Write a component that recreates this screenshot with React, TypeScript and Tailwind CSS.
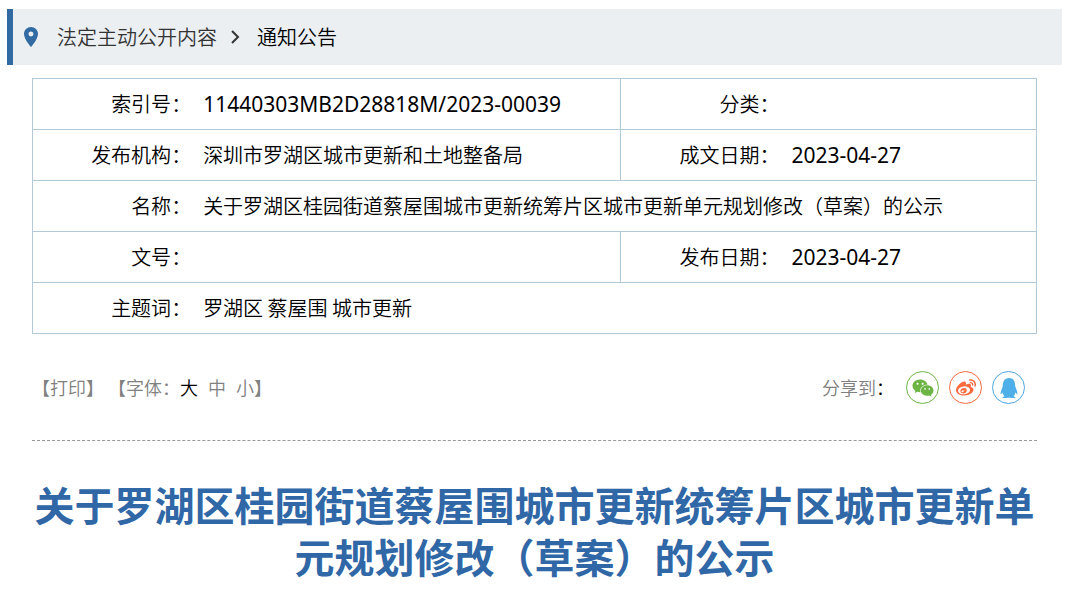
import clsx from "clsx";
import type { ReactNode } from "react";
import { AiFillWechat } from "react-icons/ai";
import { FaQq, FaWeibo } from "react-icons/fa";
import { MdLocationOn } from "react-icons/md";

const title =
  "关于罗湖区桂园街道蔡屋围城市更新统筹片区城市更新单元规划修改（草案）的公示";

const shareLinks = [
  {
    name: "微信",
    icon: AiFillWechat,
    className: "border-[#6cb544] text-[#6cb544]",
    iconClass: "size-6",
  },
  {
    name: "微博",
    icon: FaWeibo,
    className: "border-[#f2683a] text-[#fa6a3c]",
    iconClass: "size-5",
  },
  {
    name: "QQ",
    icon: FaQq,
    className: "border-[#4ba5de] text-[#4fafe8]",
    iconClass: "size-5",
  },
];

const fontSizes = ["大", "中", "小"];

function Label({ children }: { children: ReactNode }) {
  return (
    <th scope="row" className="py-2 text-right font-[350] whitespace-nowrap">
      {children}：
    </th>
  );
}

function Value({
  children,
  colSpan,
  divider,
}: {
  children?: ReactNode;
  colSpan?: number;
  divider?: boolean;
}) {
  return (
    <td
      colSpan={colSpan}
      className={clsx("py-2 pl-3", divider && "border-r border-[#b1c9d9]")}
    >
      {children}
    </td>
  );
}

function Code({ children }: { children: ReactNode }) {
  return (
    <span className="font-['Noto_Sans',sans-serif] text-[21px] font-normal">
      {children}
    </span>
  );
}

export default function App() {
  return (
    <main className="bg-white px-[7px] pt-[9px] font-['Noto_Sans_CJK_SC',sans-serif] font-[350] text-black">
      <nav
        aria-label="当前位置"
        className="flex h-14 items-center border-l-6 border-[#326ba3] bg-[#ebeff2] pl-1.5 text-[20px]"
      >
        <MdLocationOn className="size-6 text-[#326ba3]" />
        <a href="#" className="ml-3.5 text-[#333]">
          法定主动公开内容
        </a>
        <svg
          viewBox="0 0 10 14"
          className="mr-3.5 ml-2.5 h-3.5 w-4 text-[#333]"
          fill="none"
          stroke="currentColor"
          strokeWidth="2"
        >
          <path d="M2 1l6 6-6 6" />
        </svg>
        <a href="#">通知公告</a>
      </nav>

      <div className="px-[25px]">
        <table className="mt-[13px] w-full table-fixed border-collapse border border-[#b1c9d9] text-[20px] leading-[34px]">
          <colgroup>
            <col className="w-[15.8%]" />
            <col className="w-[42.8%]" />
            <col className="w-[15.8%]" />
            <col />
          </colgroup>
          <tbody className="divide-y divide-[#b1c9d9]">
            <tr>
              <Label>索引号</Label>
              <Value divider>
                <Code>11440303MB2D28818M/2023-00039</Code>
              </Value>
              <Label>分类</Label>
              <Value />
            </tr>
            <tr>
              <Label>发布机构</Label>
              <Value divider>深圳市罗湖区城市更新和土地整备局</Value>
              <Label>成文日期</Label>
              <Value>
                <Code>2023-04-27</Code>
              </Value>
            </tr>
            <tr>
              <Label>名称</Label>
              <Value colSpan={3}>{title}</Value>
            </tr>
            <tr>
              <Label>文号</Label>
              <Value divider />
              <Label>发布日期</Label>
              <Value>
                <Code>2023-04-27</Code>
              </Value>
            </tr>
            <tr>
              <Label>主题词</Label>
              <Value colSpan={3}>罗湖区 蔡屋围 城市更新</Value>
            </tr>
          </tbody>
        </table>

        <div className="flex items-center justify-between border-b border-dashed border-[#999] pt-[37px] pr-3 pb-9 text-[18px] text-[#808080]">
          <div className="flex items-center gap-1">
            <button type="button">【打印】</button>
            <div className="flex items-center">
              <span>【字体：</span>
              <div className="flex gap-2.5">
                {fontSizes.map((size, i) => (
                  <button
                    key={size}
                    type="button"
                    className={clsx(i === 0 && "text-black")}
                  >
                    {size}
                  </button>
                ))}
              </div>
              <span>】</span>
            </div>
          </div>
          <div className="flex items-center gap-2.5">
            <span className="mr-0.5">
              分享到<span className="text-black">：</span>
            </span>
            {shareLinks.map(({ name, icon: Icon, className, iconClass }) => (
              <a
                key={name}
                href="#"
                aria-label={name}
                className={clsx(
                  "flex size-[33px] items-center justify-center rounded-full border",
                  className,
                )}
              >
                <Icon className={iconClass} />
              </a>
            ))}
          </div>
        </div>

        <h1 className="mt-[37px] text-center text-[40px] leading-[52px] font-bold text-[#3067a6]">
          {title}
        </h1>
      </div>
    </main>
  );
}
